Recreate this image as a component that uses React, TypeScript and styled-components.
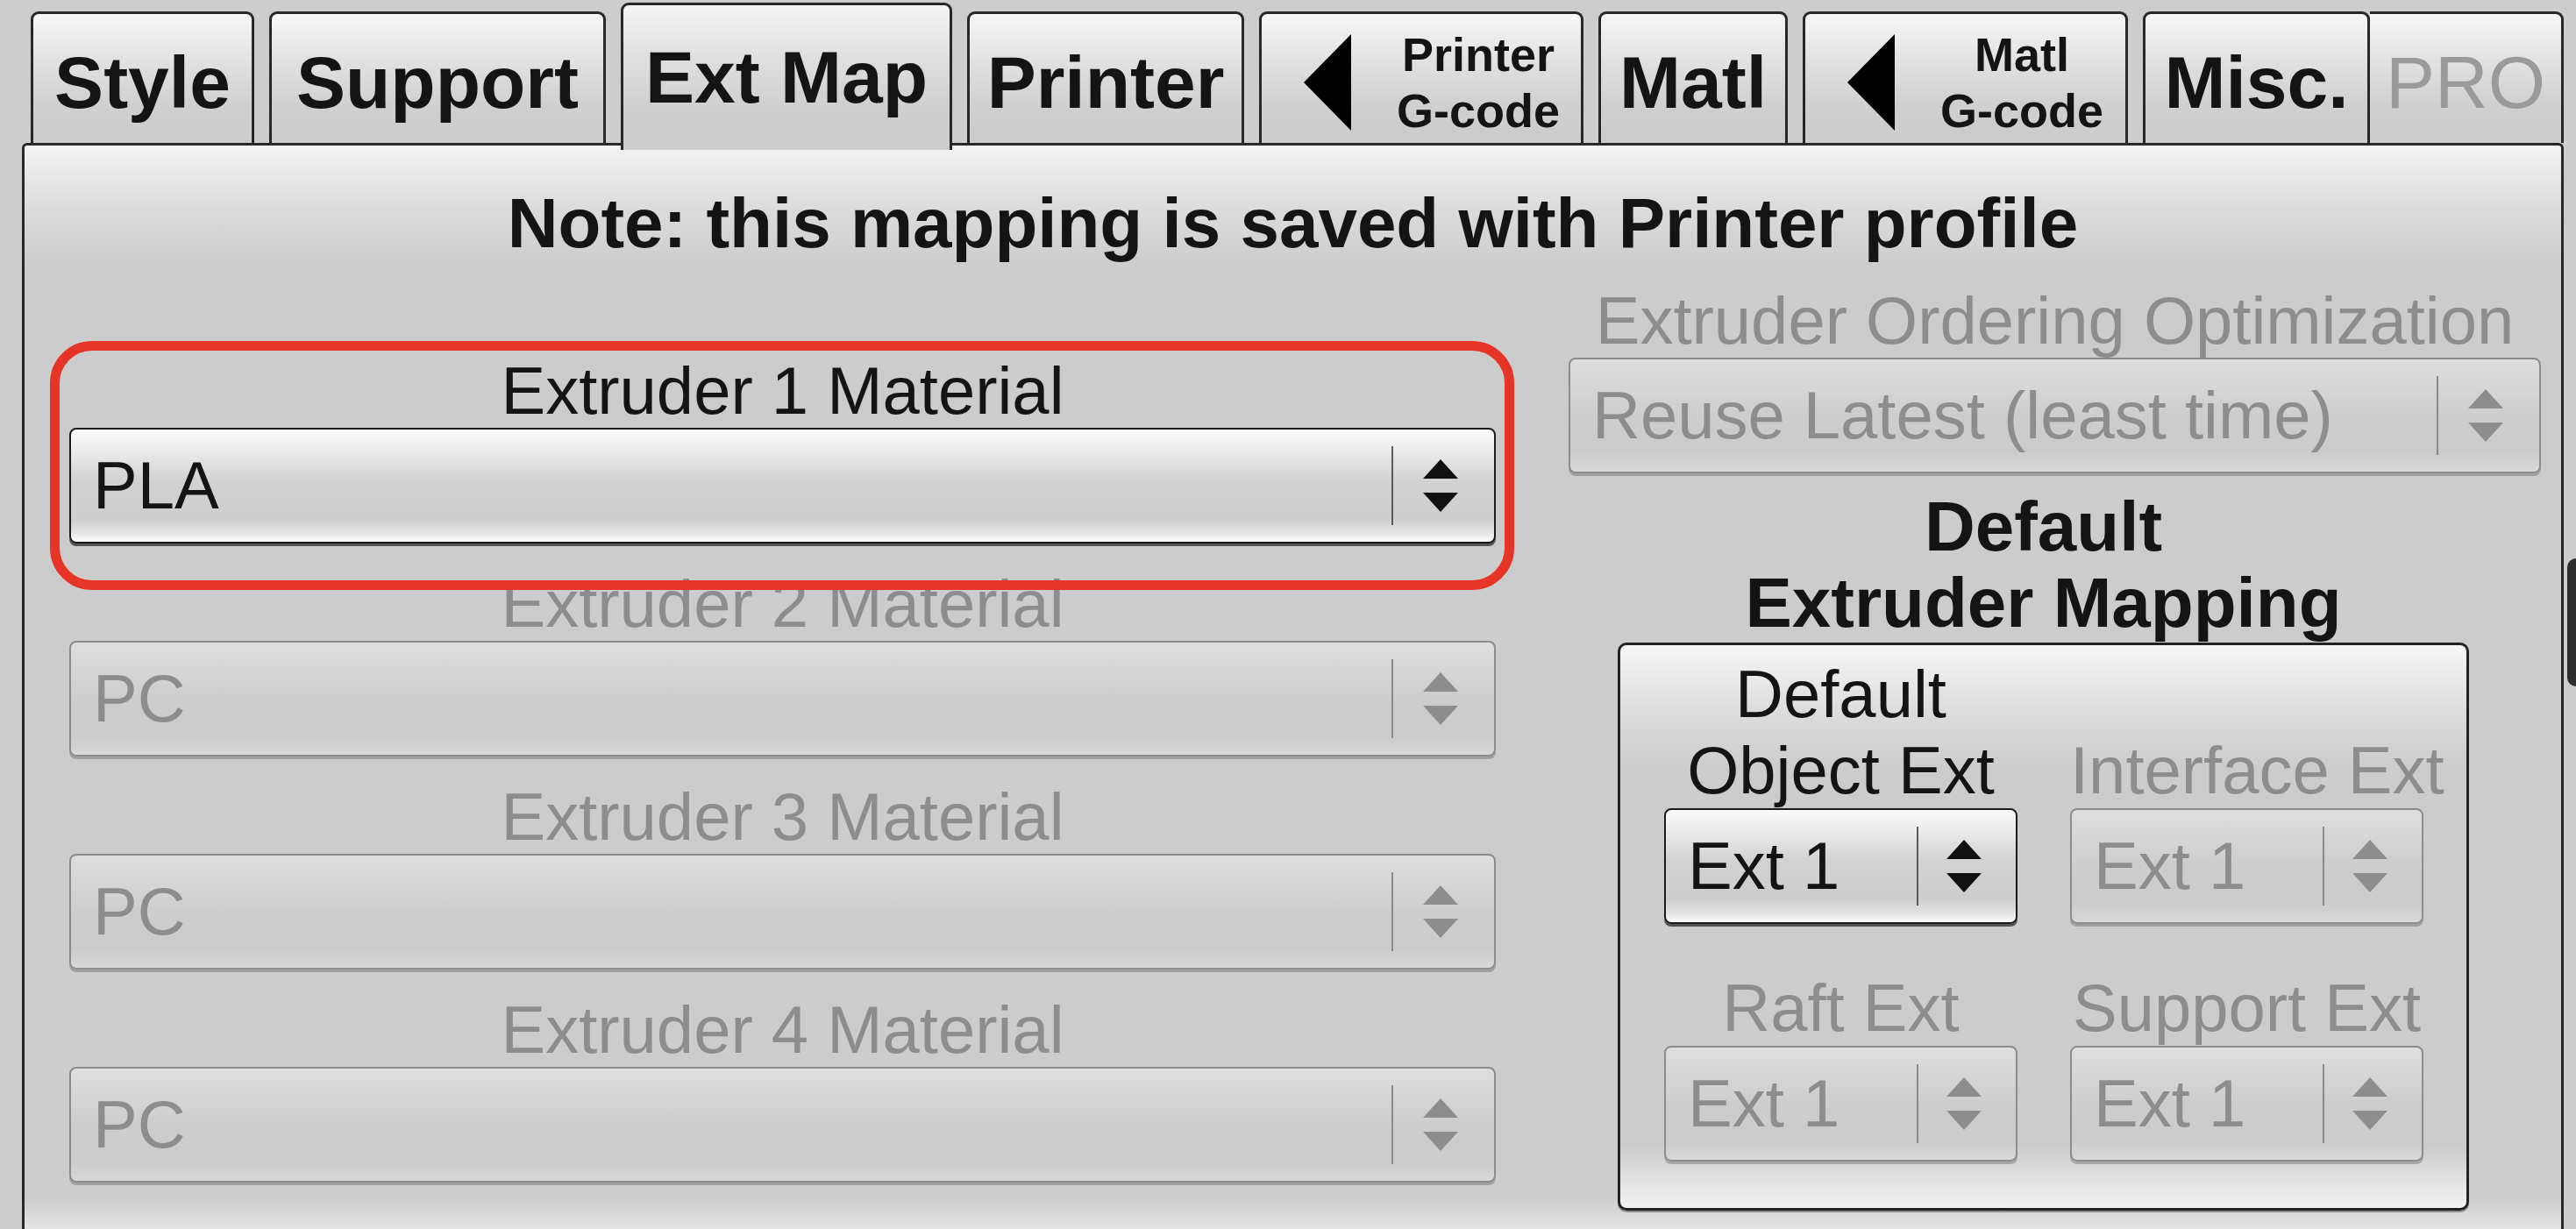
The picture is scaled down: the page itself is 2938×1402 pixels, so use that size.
import React from "react";
import styled, { createGlobalStyle, css } from "styled-components";

const Global = createGlobalStyle`
  html, body {
    margin: 0;
    padding: 0;
    background: #cdcdcd;
    overflow: hidden;
  }
  body {
    font-family: "Liberation Sans", Arial, Helvetica, sans-serif;
  }
`;

const INK = "#141414";
const MUTED = "#8d8d8d";

const Page = styled.div`
  position: relative;
  width: 2938px;
  height: 1402px;
  overflow: hidden;
  background: #cdcdcd;
  font-family: "Liberation Sans", Arial, Helvetica, sans-serif;
`;

const TabBar = styled.div`
  position: relative;
  z-index: 2;
  display: flex;
  align-items: flex-end;
  height: 163px;
  padding-left: 35px;
`;

const Tab = styled.div<{
  $w: number;
  $gap?: number;
  $active?: boolean;
  $joined?: boolean;
  $muted?: boolean;
  $split?: boolean;
}>`
  box-sizing: border-box;
  flex: none;
  width: ${(p) => p.$w}px;
  height: 150px;
  margin-left: ${(p) => (p.$gap ?? 17)}px;
  border: 3px solid #282828;
  border-bottom: none;
  border-radius: 9px 9px 0 0;
  background: linear-gradient(#f7f7f7 0%, #e2e2e2 35%, #d0d0d0 70%, #cbcbcb 100%);
  display: flex;
  align-items: center;
  justify-content: center;
  padding-top: 10px;
  font-size: 84px;
  font-weight: bold;
  line-height: 1.15;
  color: ${(p) => (p.$muted ? "#9a9a9a" : INK)};
  white-space: nowrap;
  ${(p) =>
    p.$muted &&
    css`
      font-weight: normal;
    `}
  ${(p) =>
    p.$joined &&
    css`
      border-left: none;
      border-radius: 0 9px 0 0;
    `}
  ${(p) =>
    p.$split &&
    css`
      justify-content: flex-start;
      padding-left: 48px;
      padding-top: 8px;
      gap: 52px;
    `}
  ${(p) =>
    p.$active &&
    css`
      height: 168px;
      margin-bottom: -8px;
      padding-top: 0;
      background: linear-gradient(#f5f5f5 0%, #e0e0e0 35%, #cdcdcd 75%, #cccccc 100%);
    `}
`;

const TabArrow = styled.svg`
  flex: none;
  display: block;
`;

const TabSub = styled.div`
  font-size: 54px;
  font-weight: bold;
  line-height: 64px;
  text-align: center;
`;

const Panel = styled.div`
  box-sizing: border-box;
  margin-left: 25px;
  width: 2899px;
  height: 1264px;
  border: 3px solid #282828;
  border-bottom: none;
  border-radius: 6px 6px 0 0;
  background: linear-gradient(
    #f3f3f3 0px,
    #dcdcdc 70px,
    #cccccc 140px,
    #cccccc calc(100% - 62px),
    #f4f4f4 100%
  );
  padding-top: 44px;
`;

const Note = styled.div`
  text-align: center;
  font-size: 80px;
  font-weight: bold;
  line-height: 90px;
  color: ${INK};
  white-space: nowrap;
`;

const Columns = styled.div`
  display: flex;
  gap: 83px;
  padding-left: 51px;
`;

const LeftCol = styled.div`
  width: 1627px;
  padding-top: 104px;
  display: flex;
  flex-direction: column;
`;

const RightCol = styled.div`
  width: 1109px;
  padding-top: 24px;
  display: flex;
  flex-direction: column;
`;

const Field = styled.div`
  position: relative;
  display: flex;
  flex-direction: column;
  margin-bottom: 27px;
`;

const FieldLabel = styled.div<{ $disabled?: boolean }>`
  font-size: 76px;
  line-height: 84px;
  text-align: center;
  white-space: nowrap;
  color: ${(p) => (p.$disabled ? MUTED : INK)};
`;

const Highlight = styled.div`
  position: absolute;
  z-index: 5;
  top: -15px;
  bottom: -53px;
  left: -22px;
  right: -21px;
  border: 11px solid #e63427;
  border-radius: 48px;
  pointer-events: none;
`;

const SelectBox = styled.div<{ $disabled?: boolean }>`
  box-sizing: border-box;
  height: 132px;
  display: flex;
  align-items: center;
  padding-left: 25px;
  border: 2px solid ${(p) => (p.$disabled ? "#8c8c8c" : "#1b1b1b")};
  border-radius: 8px;
  font-size: 76px;
  line-height: 88px;
  color: ${(p) => (p.$disabled ? MUTED : INK)};
  background: ${(p) =>
    p.$disabled
      ? "linear-gradient(#dedede 0%, #d6d6d6 25%, #cdcdcd 50%, #cbcbcb 82%, #d4d4d4 95%, #dadada 100%)"
      : "linear-gradient(#fbfbfb 0%, #ececec 18%, #d2d2d2 45%, #cdcdcd 80%, #e4e4e4 92%, #fcfcfc 100%)"};
  box-shadow: 0 3px 0
    ${(p) => (p.$disabled ? "rgba(0,0,0,0.22)" : "rgba(0,0,0,0.6)")};
`;

const SelectValue = styled.div`
  flex: 1;
  min-width: 0;
  white-space: nowrap;
`;

const ArrowZone = styled.div<{ $w: number }>`
  flex: none;
  width: ${(p) => p.$w}px;
  height: 100%;
  display: flex;
  align-items: center;
`;

const Divider = styled.div<{ $disabled?: boolean }>`
  width: 2px;
  height: 70%;
  background: ${(p) => (p.$disabled ? "#8a8a8a" : "#5a5a5a")};
`;

const ArrowBox = styled.div`
  flex: 1;
  display: flex;
  align-items: center;
  justify-content: center;
  padding-right: 8px;
`;

const Heading = styled.div`
  margin-top: 17px;
  font-size: 80px;
  font-weight: bold;
  line-height: 87px;
  text-align: center;
  color: ${INK};
  white-space: nowrap;
`;

const MapSection = styled.div`
  margin-left: 56px;
  width: 971px;
  display: flex;
  flex-direction: column;
`;

const MapBox = styled.div`
  box-sizing: border-box;
  margin-top: 2px;
  width: 971px;
  height: 648px;
  border: 3px solid #222222;
  border-radius: 10px;
  background: linear-gradient(
    #f7f7f7 0px,
    #dedede 70px,
    #cccccc 140px,
    #cccccc calc(100% - 70px),
    #f3f3f3 100%
  );
  box-shadow: 0 2px 0 rgba(0, 0, 0, 0.35);
  padding: 12px 49px 0 50px;
`;

const MapGrid = styled.div`
  display: grid;
  grid-template-columns: 403px 403px;
  column-gap: 60px;
  row-gap: 52px;
`;

const MapCell = styled.div`
  display: flex;
  flex-direction: column;
  justify-content: flex-end;
`;

const MapLabel = styled.div<{ $disabled?: boolean }>`
  font-size: 76px;
  line-height: 87px;
  text-align: center;
  white-space: nowrap;
  color: ${(p) => (p.$disabled ? MUTED : INK)};
`;

const EdgeKnob = styled.div`
  position: absolute;
  right: 0;
  top: 637px;
  width: 10px;
  height: 146px;
  background: #2d2d2d;
  border-radius: 14px 0 0 14px;
`;

const UpDown: React.FC<{ color: string }> = ({ color }) => (
  <svg width="40" height="60" viewBox="0 0 40 60" aria-hidden="true">
    <polygon points="20,0 40,22 0,22" fill={color} />
    <polygon points="0,38 40,38 20,60" fill={color} />
  </svg>
);

const Select: React.FC<{
  value: string;
  disabled?: boolean;
  compact?: boolean;
}> = ({ value, disabled, compact }) => (
  <SelectBox $disabled={disabled}>
    <SelectValue>{value}</SelectValue>
    <ArrowZone $w={compact ? 113 : 117}>
      <Divider $disabled={disabled} />
      <ArrowBox>
        <UpDown color={disabled ? MUTED : "#111"} />
      </ArrowBox>
    </ArrowZone>
  </SelectBox>
);

const LeftArrow = () => (
  <TabArrow width="54" height="110" viewBox="0 0 54 110" aria-hidden="true">
    <polygon points="54,0 0,55 54,110" fill="#000" />
  </TabArrow>
);

const extruders = [
  { label: "Extruder 1 Material", value: "PLA", disabled: false },
  { label: "Extruder 2 Material", value: "PC", disabled: true },
  { label: "Extruder 3 Material", value: "PC", disabled: true },
  { label: "Extruder 4 Material", value: "PC", disabled: true },
];

export default function App() {
  return (
    <Page>
      <Global />
      <TabBar>
        <Tab $w={255} $gap={0}>Style</Tab>
        <Tab $w={384}>Support</Tab>
        <Tab $w={378} $active>Ext Map</Tab>
        <Tab $w={316}>Printer</Tab>
        <Tab $w={370} $split>
          <LeftArrow />
          <TabSub>
            Printer
            <br />
            G-code
          </TabSub>
        </Tab>
        <Tab $w={216}>Matl</Tab>
        <Tab $w={371} $split>
          <LeftArrow />
          <TabSub>
            Matl
            <br />
            G-code
          </TabSub>
        </Tab>
        <Tab $w={259}>Misc.</Tab>
        <Tab $w={221} $gap={0} $joined $muted>PRO</Tab>
      </TabBar>
      <Panel>
        <Note>Note: this mapping is saved with Printer profile</Note>
        <Columns>
          <LeftCol>
            {extruders.map((e, i) => (
              <Field key={e.label}>
                {i === 0 && <Highlight />}
                <FieldLabel $disabled={e.disabled}>{e.label}</FieldLabel>
                <Select value={e.value} disabled={e.disabled} />
              </Field>
            ))}
          </LeftCol>
          <RightCol>
            <FieldLabel $disabled>Extruder Ordering Optimization</FieldLabel>
            <Select value="Reuse Latest (least time)" disabled />
            <MapSection>
              <Heading>
                Default
                <br />
                Extruder Mapping
              </Heading>
              <MapBox>
                <MapGrid>
                  <MapCell>
                    <MapLabel>
                      Default
                      <br />
                      Object Ext
                    </MapLabel>
                    <Select value="Ext 1" compact />
                  </MapCell>
                  <MapCell>
                    <MapLabel $disabled>Interface Ext</MapLabel>
                    <Select value="Ext 1" compact disabled />
                  </MapCell>
                  <MapCell>
                    <MapLabel $disabled>Raft Ext</MapLabel>
                    <Select value="Ext 1" compact disabled />
                  </MapCell>
                  <MapCell>
                    <MapLabel $disabled>Support Ext</MapLabel>
                    <Select value="Ext 1" compact disabled />
                  </MapCell>
                </MapGrid>
              </MapBox>
            </MapSection>
          </RightCol>
        </Columns>
      </Panel>
      <EdgeKnob />
    </Page>
  );
}
